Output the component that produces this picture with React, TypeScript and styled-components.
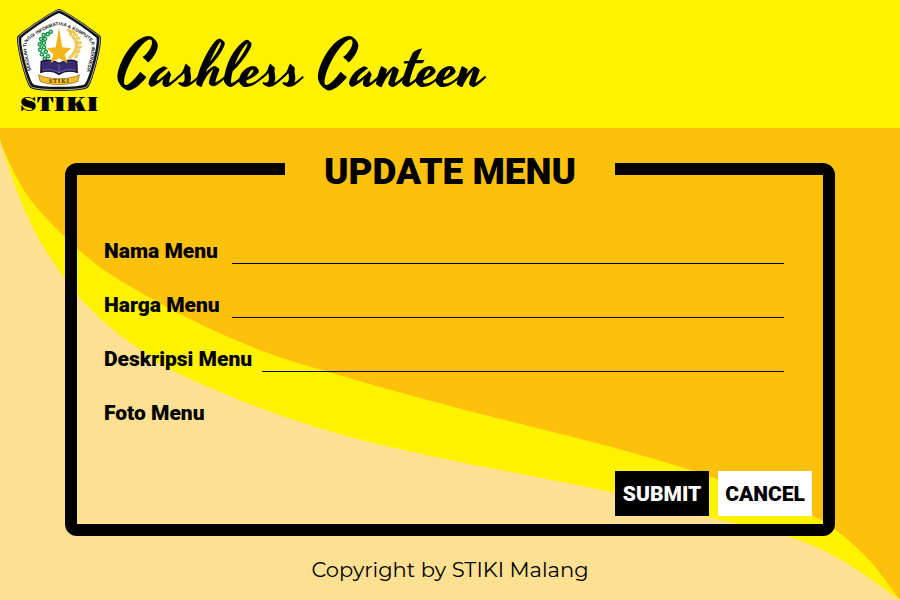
import React from "react";
import styled, { createGlobalStyle } from "styled-components";

const GlobalStyle = createGlobalStyle`
  *, *::before, *::after { box-sizing: border-box; }
  body { margin: 0; background: #fff200; color: #000; font-family: Roboto, Arial, sans-serif; }
`;

const Page = styled.div`
  display: flex;
  flex-direction: column;
  min-height: 100vh;
`;

const Header = styled.header`
  display: flex;
  align-items: center;
  gap: 16px;
  min-height: 128px;
  padding: 8px 16px 10px;
  background: #fff200;
`;

const Brand = styled.div`
  display: flex;
  flex-direction: column;
  align-items: center;
  width: 86px;
  font: 400 20px/25px "Gravitas One", "DejaVu Serif", serif;
`;

const SiteName = styled.p`
  margin: 0;
  padding-top: 12px;
  font: 400 64px/64px Yesteryear, "Liberation Serif", cursive;
`;

const Main = styled.main`
  display: grid;
  flex: 1;
  grid-template: minmax(0, 1fr) / minmax(0, 1fr);
  background: #fdc10c;
`;

const Waves = styled.svg`
  grid-area: 1 / 1;
  width: 100%;
  height: 100%;
  min-height: 0;
  contain: size;
`;

const Content = styled.div`
  grid-area: 1 / 1;
  z-index: 1;
  display: flex;
  flex-direction: column;
  padding: 19px 65px 16px;
`;

const Form = styled.form`
  display: flex;
  flex-direction: column;
`;

const Frame = styled.fieldset`
  display: flex;
  flex-direction: column;
  min-width: 0;
  margin: 0;
  padding: 46px 11px 8px;
  border: 12px solid #000;
  border-radius: 12px;
`;

const Title = styled.legend`
  width: 330px;
  margin: 0 auto;
  padding: 6px 0 0;
  text-align: center;
  font-size: 37px;
  font-weight: 900;
  line-height: 38px;
`;

const Row = styled.div`
  display: flex;
  align-items: flex-start;
  height: 54px;
  padding: 0 28px 0 16px;
`;

const Label = styled.label`
  flex: none;
  min-width: 128px;
  padding-right: 10px;
  font-size: 21px;
  font-weight: 900;
  line-height: 28px;
`;

const LineInput = styled.input`
  flex: 1;
  min-width: 0;
  height: 27px;
  padding: 0 4px;
  border: 0;
  border-bottom: 1px solid #000;
  border-radius: 0;
  outline: none;
  background: transparent;
  font: 400 18px/26px Roboto, sans-serif;
`;

const FileInput = styled.input`
  width: 1px;
  height: 1px;
  opacity: 0;
`;

const Actions = styled.div`
  display: flex;
  justify-content: flex-end;
  gap: 9px;
  margin-top: 18px;
`;

const Button = styled.button<{ $dark?: boolean }>`
  width: 94px;
  height: 45px;
  padding: 0;
  border: 0;
  background: ${(p) => (p.$dark ? "#000" : "#fff")};
  color: ${(p) => (p.$dark ? "#fff" : "#000")};
  font: 900 21px/24px Roboto, sans-serif;
  cursor: pointer;
`;

const Footer = styled.footer`
  margin-top: 20px;
  text-align: center;
  font: 400 21px/28px Montserrat, Inter, sans-serif;
`;

type Point = [number, number];

const upperEdge: Point[] = [
  [0, 12], [5, 25], [17, 50], [33, 75], [65, 109], [110, 146], [190, 191],
  [260, 222], [325, 243], [450, 278], [615, 320], [717, 351], [812, 388],
  [836, 402], [870, 433], [900, 472],
];

const lowerEdge: Point[] = [
  [0, 12], [5, 28], [17, 63], [33, 100], [50, 129], [77, 167], [110, 199], [142, 223],
  [173, 243], [260, 280], [350, 309], [450, 332], [615, 365], [707, 389],
  [787, 408], [843, 433], [900, 472],
];

// Catmull-Rom spline through the points, as cubic Bézier segments.
const smooth = (pts: Point[]) =>
  pts.slice(1).reduce((d, p, i) => {
    const a = pts[Math.max(i - 1, 0)];
    const b = pts[i];
    const c = pts[Math.min(i + 2, pts.length - 1)];
    return `${d} C${b[0] + (p[0] - a[0]) / 6} ${b[1] + (p[1] - a[1]) / 6} ${p[0] - (c[0] - b[0]) / 6} ${p[1] - (c[1] - b[1]) / 6} ${p[0]} ${p[1]}`;
  }, `M${pts[0][0]} ${pts[0][1]}`);

const shield =
  "M151 25C165 25 264 94 276 107C286 120 252 250 238 263C224 276 78 276 64 263C50 250 16 120 26 107C38 94 137 25 151 25Z";

const greenLeaves: Point[] = [
  [126, 94], [117, 101], [105, 104], [109, 115], [97, 116], [105, 127],
  [93, 132], [106, 141], [94, 148], [111, 154], [99, 162], [118, 168], [108, 176],
];

const goldLeaves = [
  [181, 90, 35], [191, 93, 20], [186, 101, 65], [201, 101, 20], [195, 111, 70],
  [209, 113, 5], [201, 123, 75], [213, 127, -5], [203, 135, 100], [213, 141, -20],
  [201, 147, 115], [209, 154, -35], [195, 158, 130], [203, 168, -50], [186, 169, 140],
];

const Crest = () => (
  <svg width="86" height="85" viewBox="21 22 260 257" role="img" aria-label="STIKI crest">
    <defs>
      <path id="motto" d="M67 211C58 180 49 146 53 129C58 112 128 74 151 74C174 74 244 112 249 129C253 146 244 180 235 211" />
    </defs>
    <path d={shield} fill="#111" />
    <path d={shield} fill="none" stroke="#fff" strokeWidth="2" transform="translate(151 150) scale(.97) translate(-151 -150)" />
    <path d={shield} fill="#fff" transform="translate(151 150) scale(.9) translate(-151 -150)" />
    <text fontFamily="Liberation Sans" fontWeight="700" fontSize="14" fill="#111">
      <textPath href="#motto">SEKOLAH TINGGI INFORMATIKA &amp; KOMPUTER INDONESIA</textPath>
    </text>
    <path d="M122 96C92 109 84 147 112 176" fill="none" stroke="#159447" strokeWidth="3" />
    {greenLeaves.map(([x, y]) => (
      <circle key={`${x}-${y}`} cx={x} cy={y} r="5" fill="#c5e6c8" stroke="#159447" strokeWidth="4" />
    ))}
    <path d="M180 88C212 100 221 145 187 174" fill="none" stroke="#e8bd3c" strokeWidth="2" />
    {goldLeaves.map(([x, y, r]) => (
      <ellipse key={`${x}-${y}`} cx={x} cy={y} rx="7" ry="4" fill="#f3cf55" stroke="#d9a520" strokeWidth="1" transform={`rotate(${r} ${x} ${y})`} />
    ))}
    <path d="M97 184C116 176 138 181 151 190C165 181 187 176 205 184L206 217C186 210 165 213 151 223C137 213 116 210 96 217Z" fill="#3b2a72" stroke="#17133b" strokeWidth="4" />
    <path d="M102 211C120 205 140 210 151 218C163 210 183 205 201 211M151 191V219" fill="none" stroke="#8c80b4" strokeWidth="2" />
    <path d="M151 80L161 141L188 144L168 162L177 188L151 174L125 188L134 162L114 144L141 141Z" fill="#f4b51b" />
    <path d="M89 224L104 230Q151 242 198 230L213 224L208 244L196 248Q151 260 106 248L94 244Z" fill="#f5bd28" stroke="#8c6414" strokeWidth="2" />
    <text x="151" y="249" textAnchor="middle" fontFamily="Liberation Serif" fontWeight="700" fontSize="16" fill="#352109">S T I K I</text>
  </svg>
);

const fields = [
  { id: "nama", label: "Nama Menu" },
  { id: "harga", label: "Harga Menu" },
  { id: "deskripsi", label: "Deskripsi Menu" },
];

export default function App() {
  return (
    <>
      <GlobalStyle />
      <Page>
        <Header>
          <Brand>
            <Crest />
            <span>STIKI</span>
          </Brand>
          <SiteName>Cashless Canteen</SiteName>
        </Header>
        <Main>
          <Waves viewBox="0 0 900 472" preserveAspectRatio="none" aria-hidden="true">
            <path d={`${smooth(upperEdge)}L0 472Z`} fill="#fff200" />
            <path d={`${smooth(lowerEdge)}L0 472Z`} fill="#fee093" />
          </Waves>
          <Content>
            <Form onSubmit={(e) => e.preventDefault()}>
              <Frame>
                <Title>UPDATE MENU</Title>
                {fields.map((f) => (
                  <Row key={f.id}>
                    <Label htmlFor={f.id}>{f.label}</Label>
                    <LineInput id={f.id} name={f.id} type="text" />
                  </Row>
                ))}
                <Row>
                  <Label htmlFor="foto">Foto Menu</Label>
                  <FileInput id="foto" name="foto" type="file" accept="image/*" />
                </Row>
                <Actions>
                  <Button type="submit" $dark>SUBMIT</Button>
                  <Button type="button">CANCEL</Button>
                </Actions>
              </Frame>
            </Form>
            <Footer>Copyright by STIKI Malang</Footer>
          </Content>
        </Main>
      </Page>
    </>
  );
}
